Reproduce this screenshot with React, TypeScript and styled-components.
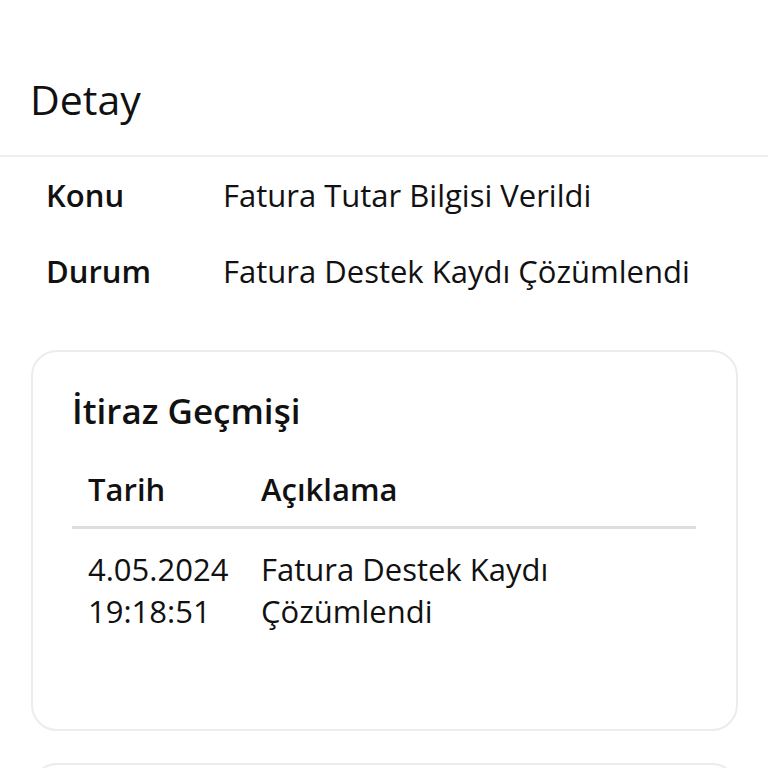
import styled, { createGlobalStyle } from 'styled-components';

const GlobalStyle = createGlobalStyle`
  html, body {
    margin: 0;
    padding: 0;
    background: #ffffff;
    font-family: "Open Sans", "Noto Sans", sans-serif;
    color: #1a1a1a;
  }
`;

const Page = styled.div`
  width: 768px;
  height: 768px;
  overflow: hidden;
  background: #fff;
`;

const Header = styled.header`
  height: 157px;
  box-sizing: border-box;
  padding: 72px 0 0 30px;
  border-bottom: 2px solid #eeeeee;
`;

const Title = styled.h1`
  margin: 0;
  font-size: 41px;
  font-weight: 400;
  line-height: 54px;
  color: #111;
`;

const InfoList = styled.div`
  padding: 13px 46px 0;
  display: flex;
  flex-direction: column;
  gap: 26px;
`;

const InfoRow = styled.div`
  display: grid;
  grid-template-columns: 177px 1fr;
  font-size: 31px;
  line-height: 50px;
`;

const InfoLabel = styled.span`
  font-weight: 600;
  color: #111;
`;

const InfoValue = styled.span`
  color: #111;
`;

const Card = styled.section`
  margin: 54px 30px 32px 31px;
  height: 381px;
  box-sizing: border-box;
  border: 2px solid #ececec;
  border-radius: 26px;
  padding: 33px 40px 0 39px;
`;

const CardTitle = styled.h2`
  margin: 0;
  font-size: 35px;
  font-weight: 600;
  line-height: 52px;
  color: #111;
`;

const Table = styled.div`
  margin-top: 31px;
`;

const TableRow = styled.div<{ $head?: boolean }>`
  display: grid;
  grid-template-columns: 173px 1fr;
  padding: 0 16px;
  font-size: 31px;
  line-height: 42px;
  font-weight: ${(p) => (p.$head ? 600 : 400)};
  border-bottom: ${(p) => (p.$head ? '3px solid #dddddd' : 'none')};
  padding-bottom: ${(p) => (p.$head ? '16px' : '0')};
  padding-top: ${(p) => (p.$head ? '0' : '19px')};
  color: #111;
`;

const NextCard = styled.div`
  margin: 0 30px 0 31px;
  height: 60px;
  border: 2px solid #ececec;
  border-radius: 26px;
`;

export default function App() {
  return (
    <Page>
      <GlobalStyle />
      <Header>
        <Title>Detay</Title>
      </Header>
      <InfoList>
        <InfoRow>
          <InfoLabel>Konu</InfoLabel>
          <InfoValue>Fatura Tutar Bilgisi Verildi</InfoValue>
        </InfoRow>
        <InfoRow>
          <InfoLabel>Durum</InfoLabel>
          <InfoValue>Fatura Destek Kaydı Çözümlendi</InfoValue>
        </InfoRow>
      </InfoList>
      <Card>
        <CardTitle>İtiraz Geçmişi</CardTitle>
        <Table>
          <TableRow $head>
            <span>Tarih</span>
            <span>Açıklama</span>
          </TableRow>
          <TableRow>
            <span>4.05.2024<br />19:18:51</span>
            <span>Fatura Destek Kaydı<br />Çözümlendi</span>
          </TableRow>
        </Table>
      </Card>
      <NextCard />
    </Page>
  );
}
